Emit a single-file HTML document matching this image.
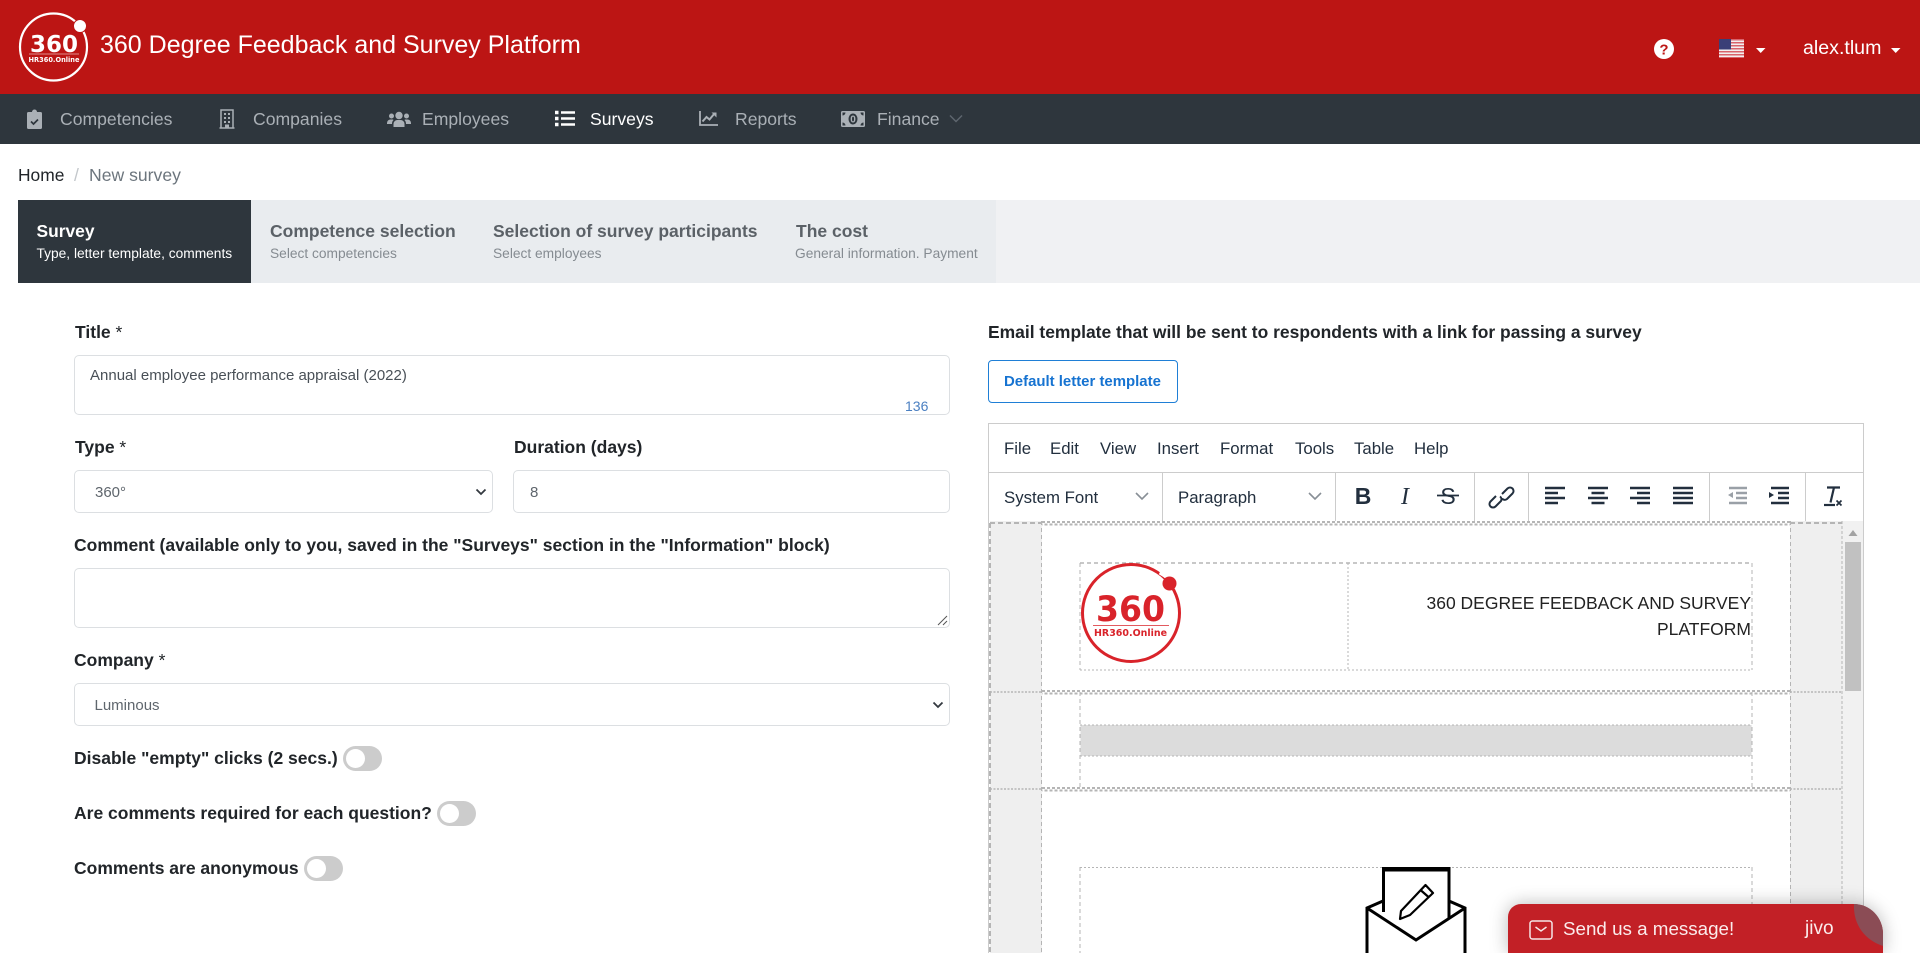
<!DOCTYPE html>
<html lang="en"><head><meta charset="utf-8"><title>360 Degree Feedback and Survey Platform</title>
<style>
html,body{margin:0;padding:0;width:1920px;height:953px;overflow:hidden;background:#fff;font-family:"Liberation Sans",Arial,sans-serif}
.a{position:absolute;white-space:nowrap}
.t{position:absolute;white-space:nowrap;line-height:24px}
.nav{font-size:17.6px;color:#aab0b6;top:107px}
.lb{font-size:17.5px;font-weight:700;color:#212529}
.box{position:absolute;box-sizing:border-box;border:1px solid #dcdfe2;border-radius:5px;background:#fff}
.fv{font-size:15px;color:#495057}
.tog{position:absolute;width:39px;height:25px;border-radius:13px;background:#ccc}
.tog:after{content:"";position:absolute;left:3px;top:3px;width:19px;height:19px;border-radius:50%;background:#fff}
.m{font-size:16.8px;color:#222f3e;top:437px}
.sep{position:absolute;top:472px;width:1px;height:49px;background:#ccc}
.sb{font-size:13.75px;color:#858b91;top:242px}
.sh{font-size:17.5px;font-weight:700;color:#5b6167;top:219px}
</style></head><body>
<div class="a" style="left:0;top:0;width:1920px;height:94px;background:#bc1514"></div>
<div class="a" style="left:0;top:94px;width:1920px;height:50px;background:#2e363d"></div>

<svg class="a" style="left:0;top:0" width="110" height="94" viewBox="0 0 110 94">
<circle cx="53.5" cy="47" r="33.5" fill="none" stroke="#fff" stroke-width="2.2"/>
<circle cx="80" cy="26" r="6.5" fill="#fff" stroke="#bc1514" stroke-width="1"/>
<text x="54" y="52" text-anchor="middle" font-family="DejaVu Sans" font-weight="700" font-size="23" fill="#fff" textLength="48" lengthAdjust="spacingAndGlyphs">360</text>
<line x1="29" x2="79" y1="54" y2="54" stroke="#fff" stroke-width=".6"/>
<text x="54" y="62" text-anchor="middle" font-family="DejaVu Sans" font-weight="700" font-size="7" fill="#fff" textLength="51" lengthAdjust="spacingAndGlyphs">HR360.Online</text>
</svg>
<div class="t" style="left:100px;top:33px;font-size:25px;color:#fff">360 Degree Feedback and Survey Platform</div>

<svg class="a" style="left:1653px;top:38px" width="22" height="22" viewBox="0 0 22 22"><circle cx="11" cy="11" r="10" fill="#fff"/><text x="11" y="16.5" text-anchor="middle" font-family="Liberation Sans" font-weight="700" font-size="15" fill="#bc1514">?</text></svg>
<svg class="a" style="left:1719px;top:39px" width="25" height="19" viewBox="0 0 25 19"><rect width="25" height="19" fill="#f3f0f0"/><g fill="#d9636b"><rect width="25" height="1.5"/><rect y="3" width="25" height="1.5"/><rect y="6" width="25" height="1.5"/><rect y="9" width="25" height="1.5"/><rect y="12" width="25" height="1.5"/><rect y="15" width="25" height="1.5"/><rect y="18" width="25" height="1"/></g><rect width="12" height="10.5" fill="#3a3f77"/></svg>
<svg class="a" style="left:1755px;top:47px" width="11" height="7"><path d="M1 1h9.500L5.700 6z" fill="#fff"/></svg>
<div class="t" style="left:1803px;top:36px;font-size:19.6px;color:#fff">alex.tlum</div>
<svg class="a" style="left:1890px;top:47px" width="11" height="7"><path d="M1 1h9.500L5.700 6z" fill="#fff"/></svg>

<svg class="a" style="left:27px;top:109px" width="15" height="20" viewBox="0 0 15 20"><path d="M1.500 3H5a2.500 2.500 0 0 1 5 0h3.500A1.500 1.500 0 0 1 15 4.500V18.500A1.500 1.500 0 0 1 13.500 20H1.500A1.500 1.500 0 0 1 0 18.500V4.500A1.500 1.500 0 0 1 1.500 3z" fill="#aab0b6"/><path d="M4 12.500l2.500 2.500L11 10.500" fill="none" stroke="#2e363d" stroke-width="1.700"/></svg>
<div class="t nav" style="left:60px">Competencies</div>
<svg class="a" style="left:219px;top:109px" width="16" height="20" viewBox="0 0 16 20"><path d="M2 1h12v18H2zM0.500 19h15" fill="none" stroke="#aab0b6" stroke-width="1.500"/><path d="M5 4h2v2H5zM9 4h2v2H9zM5 8h2v2H5zM9 8h2v2H9zM5 12h2v2H5zM9 12h2v2H9zM6 15.500h4V19H6z" fill="#aab0b6"/></svg>
<div class="t nav" style="left:253px">Companies</div>
<svg class="a" style="left:387px;top:110px" width="24" height="18" viewBox="0 0 24 18"><g fill="#aab0b6"><circle cx="12" cy="5.500" r="3.700"/><circle cx="4.500" cy="6" r="2.500"/><circle cx="19.500" cy="6" r="2.500"/><path d="M6.500 17v-3a4 4 0 0 1 4-4h3a4 4 0 0 1 4 4v3zM0 13a3.500 3.500 0 0 1 3.500-3.500h2.500l.5 0.500C5.300 11 5 12.500 5 14H0zM24 13a3.500 3.500 0 0 0-3.500-3.500H18l-.5.500C18.700 11 19 12.500 19 14h5z"/></g></svg>
<div class="t nav" style="left:422px">Employees</div>
<svg class="a" style="left:555px;top:110px" width="20" height="17" viewBox="0 0 20 17"><path d="M6 2.500h14M6 8.500h14M6 14.500h14" stroke="#fff" stroke-width="2.400"/><path d="M0 .8h3.500v3.400H0zM0 6.800h3.500v3.400H0zM0 12.800h3.500v3.400H0z" fill="#fff"/></svg>
<div class="t nav" style="left:590px;color:#fff">Surveys</div>
<svg class="a" style="left:699px;top:111px" width="19" height="15" viewBox="0 0 19 15"><path d="M1 0v14h18" fill="none" stroke="#aab0b6" stroke-width="1.800"/><path d="M3.500 10.500l4-4.500 3 2.500 5-6" fill="none" stroke="#aab0b6" stroke-width="2"/><path d="M12.500 1.500h5v5z" fill="#aab0b6"/></svg>
<div class="t nav" style="left:735px">Reports</div>
<svg class="a" style="left:841px;top:111px" width="24" height="16" viewBox="0 0 24 16"><rect width="24" height="16" rx="1.500" fill="#aab0b6"/><ellipse cx="12" cy="8" rx="4.500" ry="5.500" fill="#2e363d"/><text x="12" y="11.500" text-anchor="middle" font-family="Liberation Sans" font-size="10" font-weight="700" fill="#aab0b6">0</text><path d="M1.500 1.500h3a3 3 0 0 1-3 3zM22.500 1.500h-3a3 3 0 0 0 3 3zM1.500 14.500h3a3 3 0 0 0-3-3zM22.500 14.500h-3a3 3 0 0 1 3-3z" fill="#2e363d"/></svg>
<div class="t nav" style="left:877px">Finance</div>
<svg class="a" style="left:949px;top:114px" width="14" height="9"><path d="M1 1.500l6 6 6-6" fill="none" stroke="#5d666e" stroke-width="1.500"/></svg>

<div class="t" style="left:18px;top:163px;font-size:17.4px;color:#212529">Home</div>
<div class="t" style="left:74px;top:163px;font-size:17.6px;color:#c3c7cb">/</div>
<div class="t" style="left:89px;top:163px;font-size:17.6px;color:#6c757d">New survey</div>

<div class="a" style="left:18px;top:200px;width:1902px;height:83px;background:#f0f1f3"></div>
<div class="a" style="left:251px;top:200px;width:745px;height:83px;background:#e9ecef"></div>
<div class="a" style="left:18px;top:200px;width:233px;height:83px;background:#2e363d"></div>
<div class="t" style="left:36.500px;top:219px;font-size:17.4px;font-weight:700;color:#fff">Survey</div>
<div class="t sb" style="left:36.500px;color:#fff">Type, letter template, comments</div>
<div class="t sh" style="left:270px">Competence selection</div>
<div class="t sb" style="left:270px">Select competencies</div>
<div class="t sh" style="left:493px">Selection of survey participants</div>
<div class="t sb" style="left:493px">Select employees</div>
<div class="t sh" style="left:796px">The cost</div>
<div class="t sb" style="left:795px">General information. Payment</div>

<div class="t lb" style="left:75px;top:320px">Title <span style="font-weight:400">*</span></div>
<div class="box" style="left:74px;top:355px;width:876px;height:60px"></div>
<div class="t fv" style="left:90px;top:364px">Annual employee performance appraisal (2022)</div>
<div class="t" style="left:905px;top:394px;font-size:14px;color:#4a7fc1">136</div>

<div class="t lb" style="left:75px;top:435px">Type <span style="font-weight:400">*</span></div>
<div class="box" style="left:74px;top:470px;width:419px;height:43px"></div>
<div class="t fv" style="left:95px;top:481px;color:#5f666d">360°</div>
<svg class="a" style="left:475px;top:488px" width="12" height="8"><path d="M1.500 1.500l4.500 4.500 4.500-4.500" fill="none" stroke="#343a40" stroke-width="1.800"/></svg>
<div class="t lb" style="left:514px;top:435px">Duration (days)</div>
<div class="box" style="left:513px;top:470px;width:437px;height:43px"></div>
<div class="t fv" style="left:530px;top:481px;color:#5f666d">8</div>

<div class="t lb" style="left:74px;top:533px">Comment (available only to you, saved in the "Surveys" section in the "Information" block)</div>
<div class="box" style="left:74px;top:568px;width:876px;height:60px"></div>
<svg class="a" style="left:936px;top:614px" width="12" height="12"><path d="M2 11L11 2M7 11l4-4" stroke="#555" stroke-width="1"/></svg>

<div class="t lb" style="left:74px;top:648px">Company <span style="font-weight:400">*</span></div>
<div class="box" style="left:74px;top:683px;width:876px;height:43px"></div>
<div class="t fv" style="left:94.500px;top:694px;color:#5f666d">Luminous</div>
<svg class="a" style="left:932px;top:701px" width="12" height="8"><path d="M1.500 1.500l4.500 4.500 4.500-4.500" fill="none" stroke="#343a40" stroke-width="1.800"/></svg>

<div class="t lb" style="left:74px;top:746px">Disable "empty" clicks (2 secs.)</div>
<div class="tog" style="left:343px;top:746px"></div>
<div class="t lb" style="left:74px;top:801px">Are comments required for each question?</div>
<div class="tog" style="left:437px;top:801px"></div>
<div class="t lb" style="left:74px;top:856px">Comments are anonymous</div>
<div class="tog" style="left:304px;top:856px"></div>

<div class="t lb" style="left:988px;top:320px;font-size:17.47px">Email template that will be sent to respondents with a link for passing a survey</div>
<div class="a" style="left:988px;top:360px;width:190px;height:43px;box-sizing:border-box;border:1px solid #1f7fd6;border-radius:4px"></div>
<div class="t" style="left:1004px;top:370px;font-size:14.950px;font-weight:700;color:#1673d1">Default letter template</div>

<!-- editor -->
<div class="a" style="left:988px;top:423px;width:876px;height:530px;box-sizing:border-box;border:1px solid #ccc;border-bottom:0;background:#fff"></div>
<div class="a" style="left:989px;top:472px;width:874px;height:1px;background:#ccc"></div>
<div class="t m" style="left:1004px">File</div>
<div class="t m" style="left:1050px">Edit</div>
<div class="t m" style="left:1100px">View</div>
<div class="t m" style="left:1157px">Insert</div>
<div class="t m" style="left:1220px">Format</div>
<div class="t m" style="left:1295px">Tools</div>
<div class="t m" style="left:1354px">Table</div>
<div class="t m" style="left:1414px">Help</div>
<div class="sep" style="left:1162px"></div><div class="sep" style="left:1335px"></div><div class="sep" style="left:1474px"></div><div class="sep" style="left:1528px"></div><div class="sep" style="left:1709px"></div><div class="sep" style="left:1805px"></div>
<div class="t m" style="left:1004px;top:486px">System Font</div>
<div class="t m" style="left:1178px;top:486px">Paragraph</div>

<svg class="a" style="left:0;top:0" width="1920" height="953" viewBox="0 0 1920 953">
<g fill="none" stroke="#888f96" stroke-width="1.600"><path d="M1136 493l6 6 6-6M1309 493l6 6 6-6"/></g>
<text x="1363" y="504" text-anchor="middle" font-family="Liberation Sans" font-weight="700" font-size="23" fill="#222f3e">B</text>
<text x="1405" y="504" text-anchor="middle" font-family="Liberation Serif" font-style="italic" font-size="24" fill="#222f3e">I</text>
<text x="1448" y="504" text-anchor="middle" font-family="Liberation Sans" font-size="23" fill="#222f3e">S</text>
<path d="M1437 495.500h22" stroke="#222f3e" stroke-width="1.800"/>
<g fill="none" stroke="#222f3e" stroke-width="2"><path d="M1496 496l-5.500 5.500a3.500 3.500 0 0 0 5 5l5.500-5.500a3.500 3.500 0 0 0-1-4.500"/><path d="M1502 494l5.500-5.500a3.500 3.500 0 0 1 5 5l-5.500 5.500a3.500 3.500 0 0 1-5-.5"/></g>
<g stroke="#222f3e" stroke-width="2.400">
<path d="M1545 488h20M1545 493h13M1545 498h20M1545 503h13"/>
<path d="M1588 488h20M1591.500 493h13M1588 498h20M1591.500 503h13"/>
<path d="M1630 488h20M1637 493h13M1630 498h20M1637 503h13"/>
<path d="M1673 488h20M1673 493h20M1673 498h20M1673 503h20"/>
</g>
<g stroke="#9aa0a7" stroke-width="2.400"><path d="M1729 488h18M1736 493h11M1736 498h11M1729 503h18"/></g><path d="M1733 492v6l-5-3z" fill="#9aa0a7"/>
<g stroke="#222f3e" stroke-width="2.400"><path d="M1771 488h18M1778 493h11M1778 498h11M1771 503h18"/></g><path d="M1769 492v6l5-3z" fill="#222f3e"/>
<path d="M1827 487.500h13M1834 487.500l-3.500 15" fill="none" stroke="#222f3e" stroke-width="2.200"/><path d="M1824 505h11" stroke="#222f3e" stroke-width="2.200"/><path d="M1836.500 500.500l5 5M1841.500 500.500l-5 5" stroke="#222f3e" stroke-width="1.700"/>

<!-- editor body -->
<rect x="990" y="521" width="52" height="432" fill="#efefef"/>
<rect x="1790" y="521" width="52" height="432" fill="#efefef"/>
<rect x="1842" y="521" width="21" height="432" fill="#f1f1f1"/>
<rect x="1845" y="542" width="16" height="149" fill="#c1c1c1"/>
<path d="M1853 530l4.500 6h-9z" fill="#a3a3a3"/>
<g fill="none" stroke="#b5b5b5">
<path d="M990 523V953" stroke-width="2" stroke-dasharray="5 3"/>
<path d="M1041.500 521V953M1790.500 521V953" stroke-width="1" stroke-dasharray="4 3"/>
<path d="M1842 521V953" stroke-width="1" stroke-dasharray="3 2"/>
<path d="M990 523H1042M1790 523H1842" stroke-width="2" stroke-dasharray="5 3"/>
<path d="M1042 522H1790" stroke-width="2" stroke-dasharray="3 2"/>
<path d="M1042 524.500H1790" stroke-width="2" stroke-dasharray="3 2" stroke-dashoffset="2.500"/>
<path d="M990 692H1042M1790 692H1842" stroke-width="1.500" stroke-dasharray="2 1.500"/>
<path d="M1042 691H1790" stroke-width="2" stroke-dasharray="3 2"/>
<path d="M1042 693.500H1790" stroke-width="2" stroke-dasharray="3 2" stroke-dashoffset="2.500"/>
<path d="M990 789H1042M1790 789H1842" stroke-width="1.500" stroke-dasharray="2 1.500"/>
<path d="M1042 788H1790" stroke-width="2" stroke-dasharray="3 2"/>
<path d="M1042 790.500H1790" stroke-width="2" stroke-dasharray="3 2" stroke-dashoffset="2.500"/>
<path d="M1080 563H1752" stroke-width="1.500" stroke-dasharray="4 3"/>
<path d="M1080 670H1752M1348 563V670" stroke-width="1" stroke-dasharray="2 2"/>
<path d="M1080 563V670M1752 563V670" stroke-width="1" stroke-dasharray="4 3"/>
<rect x="1080.500" y="725" width="671" height="31" fill="#dcdcdc" stroke="none"/>
<path d="M1080 725H1752M1080 756H1752" stroke-width="1" stroke-dasharray="2 2"/>
<path d="M1080 692V788M1752 692V788" stroke-width="1" stroke-dasharray="4 3"/>
<path d="M1080 867.500H1752" stroke-width="1" stroke-dasharray="2 2"/>
<path d="M1080 867V953M1752 867V953" stroke-width="1" stroke-dasharray="4 3"/>
</g>

<!-- email logo -->
<circle cx="1131" cy="613" r="48.500" fill="none" stroke="#d9232a" stroke-width="3"/>
<path d="M1160 572a50 50 0 0 1 17 15" stroke="#fff" stroke-width="5" fill="none"/>
<circle cx="1169.500" cy="583.500" r="7" fill="#d9232a"/>
<text x="1130.500" y="621" text-anchor="middle" font-family="DejaVu Sans" font-weight="700" font-size="35" fill="#d9232a" textLength="69" lengthAdjust="spacingAndGlyphs">360</text>
<path d="M1093 625.500h76" stroke="#d9232a" stroke-width=".8"/>
<text x="1130.500" y="636" text-anchor="middle" font-family="DejaVu Sans" font-weight="700" font-size="10" fill="#d9232a" textLength="73" lengthAdjust="spacingAndGlyphs">HR360.Online</text>

<!-- envelope -->
<path d="M1367 953V908L1383 901M1465 953V908L1449 901" fill="none" stroke="#000" stroke-width="3"/>
<path d="M1383.500 912V870H1449V918" fill="none" stroke="#000" stroke-width="3"/>
<path d="M1382 868.500H1450.500" stroke="#000" stroke-width="3"/>
<path d="M1367 908L1416 940L1465 908" fill="none" stroke="#000" stroke-width="3"/>
<path d="M1400 919L1401 911L1425.500 885L1433 893L1410 915ZM1420.500 890L1428.500 897" fill="none" stroke="#000" stroke-width="2.200" stroke-linejoin="round"/>
</svg>

<div class="t" style="right:169px;top:590px;font-size:17.5px;line-height:26px;color:#222">360 DEGREE FEEDBACK AND SURVEY</div>
<div class="t" style="right:169px;top:616px;font-size:17.5px;line-height:26px;color:#222">PLATFORM</div>

<!-- jivo -->
<div class="a" style="left:1508px;top:904px;width:375px;height:49px;background:#c22026;border-radius:13px 30px 0 0;box-shadow:0 0 18px rgba(0,0,0,.28)"></div>
<svg class="a" style="left:1850px;top:900px" width="36" height="50" viewBox="1850 900 36 50"><path d="M1854 904A29 30 0 0 1 1883 934V946C1865 940 1853 925 1854 904Z" fill="#8b4c55"/></svg>
<svg class="a" style="left:1529px;top:920px" width="24" height="20" viewBox="0 0 24 20"><rect x="1" y="1" width="22" height="18" rx="2.500" fill="none" stroke="#f5e6e6" stroke-width="1.500"/><path d="M6.500 7l5.500 4 5.500-4" fill="none" stroke="#f5e6e6" stroke-width="1.500"/></svg>
<div class="t" style="left:1563px;top:917px;font-size:18.800px;color:#fbecec">Send us a message!</div>
<div class="t" style="left:1805px;top:917px;font-size:19px;color:#fbecec">jivo</div>
</body></html>
